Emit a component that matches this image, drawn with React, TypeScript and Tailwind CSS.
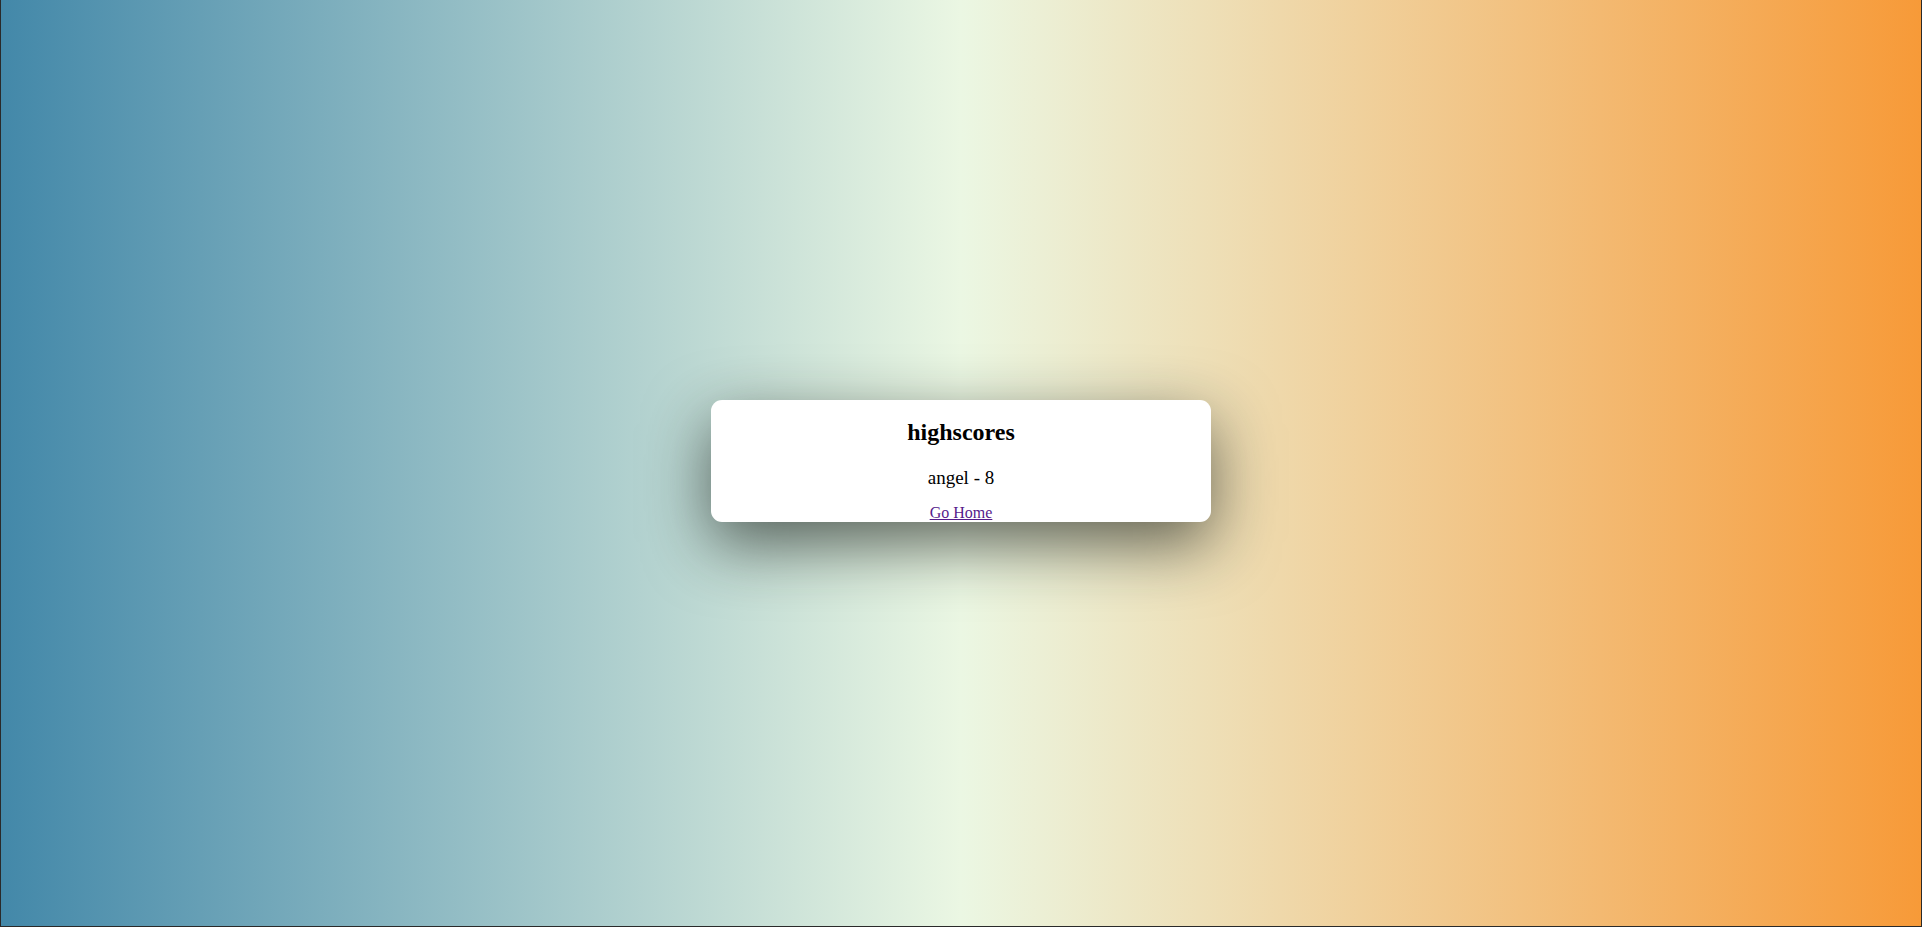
export default function App() {
  return (
    <div
      className="flex h-screen w-full items-center justify-center border-x border-b border-[#2a2a2a] bg-[linear-gradient(to_right,#4388a9,#ebf7e3_50%,#f79a38)]"
      style={{ fontFamily: '"Liberation Serif", "Times New Roman", serif' }}
    >
      <div className="mb-[4px] flex h-[122px] w-[500px] flex-col items-center rounded-[11px] bg-white pt-[18px] text-black shadow-[0_22px_65px_rgba(20,25,20,0.65)]">
        <h2 className="text-[24px] font-bold leading-[28px]">highscores</h2>
        <p className="mt-[21px] text-[19px] leading-[22px]">angel - 8</p>
        <a href="#" className="mt-[15px] text-[16px] leading-[18px] text-[#551a8b] underline">
          Go Home
        </a>
      </div>
    </div>
  );
}
